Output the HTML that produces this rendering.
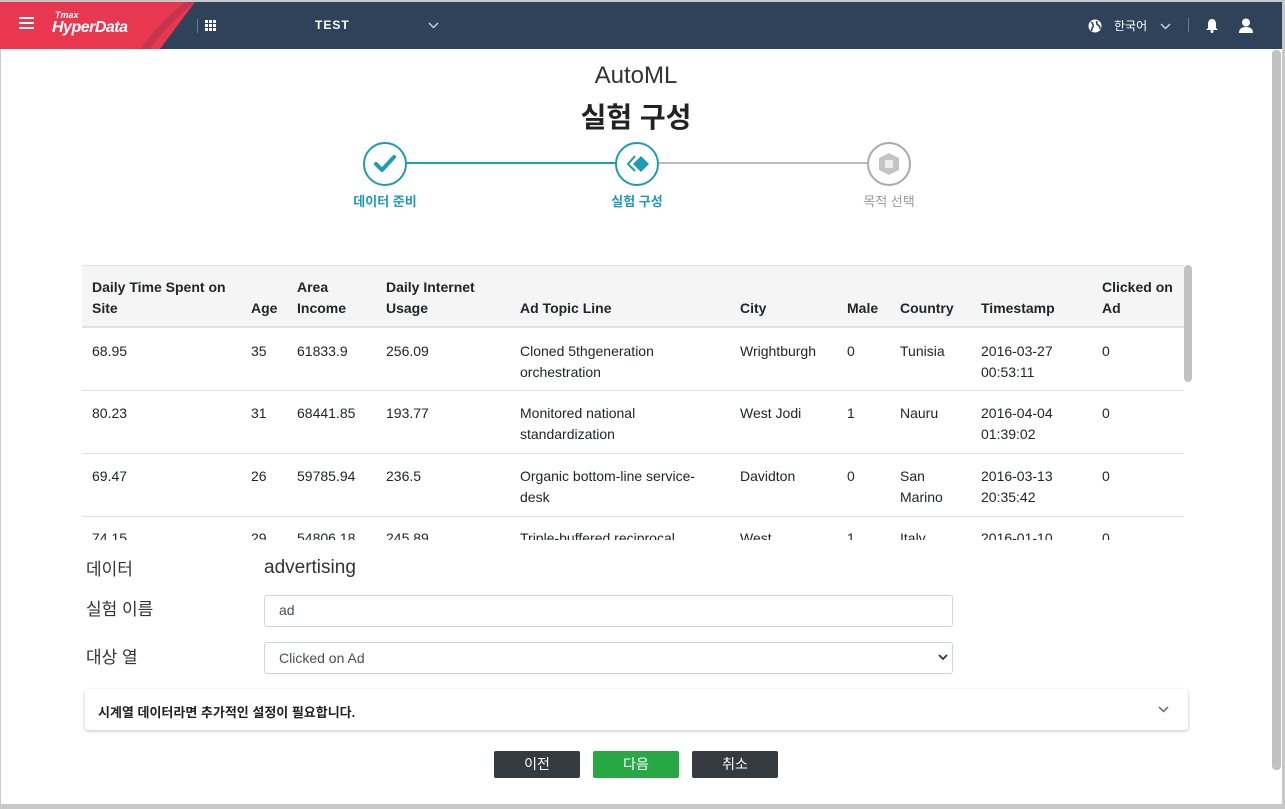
<!DOCTYPE html>
<html><head><meta charset="utf-8"><style>
*{box-sizing:border-box;margin:0;padding:0}
body{width:1285px;height:809px;overflow:hidden;background:#fff;font-family:"Liberation Sans","Noto Sans CJK KR",sans-serif;color:#212529;position:relative}
.a{position:absolute}
.hdr{left:0;top:0;width:1285px;height:49px;background:#2e4259;border-top:2px solid #c8c8c8}
.t{font-size:14px;color:#212529;line-height:21px}
.th{font-weight:bold}
.row{left:82px;width:1102px;border-bottom:1px solid #dee2e6}
.btn{top:751px;height:27px;width:86px;border-radius:2px;color:#fff;font-size:14px;text-align:center;line-height:27px}
</style></head><body>
<div class="a hdr">
 <svg class="a" style="left:0;top:0" width="200" height="47"><path d="M0 0H195L160 47H0Z" fill="#e8374f"/><path d="M150 47 Q170 20 195 0 H185 Q160 20 140 47Z" fill="#b8354f" opacity=".7"/></svg>
 <div class="a" style="left:19px;top:15px;width:15px;height:2px;background:#fff;box-shadow:0 5px 0 #fff,0 10px 0 #fff"></div>
 <div class="a" style="left:55px;top:8px;color:#fff;font-size:9px;font-weight:bold;font-style:italic">Tmax</div>
 <div class="a" style="left:52px;top:17px;color:#fff;font-size:16px;font-weight:bold;font-style:italic;letter-spacing:-0.5px">HyperData</div>
 <div class="a" style="left:197px;top:17px;width:1px;height:14px;background:#6b7b8d"></div>
 <svg class="a" style="left:205px;top:18px" width="12" height="12" fill="#fff"><rect x="0" y="0" width="3" height="3"/><rect x="4" y="0" width="3" height="3"/><rect x="8" y="0" width="3" height="3"/><rect x="0" y="4" width="3" height="3"/><rect x="4" y="4" width="3" height="3"/><rect x="8" y="4" width="3" height="3"/><rect x="0" y="8" width="3" height="3"/><rect x="4" y="8" width="3" height="3"/><rect x="8" y="8" width="3" height="3"/></svg>
 <div class="a" style="left:315px;top:16px;color:#fff;font-size:12px;font-weight:bold;letter-spacing:1px">TEST</div>
 <svg class="a" style="left:428px;top:20px" width="11" height="7"><path d="M1 1L5.5 5.5L10 1" stroke="#c8d0da" stroke-width="1.5" fill="none"/></svg>
 <svg class="a" style="left:1088px;top:17px" width="14" height="14"><circle cx="7" cy="7" r="6.5" fill="#fff"/><path d="M3 3Q6 5 5 8Q3 10 4 12M9 2Q8 5 10 6Q12 7 12 10" stroke="#2e4259" stroke-width="1.6" fill="none"/></svg>
 <div class="a" style="left:1114px;top:15px;color:#fff;font-size:12px">한국어</div>
 <svg class="a" style="left:1160px;top:21px" width="11" height="7"><path d="M1 1L5.5 5.5L10 1" stroke="#c8d0da" stroke-width="1.5" fill="none"/></svg>
 <div class="a" style="left:1188px;top:16px;width:1px;height:14px;background:#6b7b8d"></div>
 <svg class="a" style="left:1205px;top:16px" width="14" height="15" fill="#fff"><path d="M7 1C4 1 3 4 3 6V10L1 12H13L11 10V6C11 4 10 1 7 1Z"/><circle cx="7" cy="13.5" r="1.5"/></svg>
 <svg class="a" style="left:1238px;top:16px" width="16" height="15" fill="#fff"><circle cx="8" cy="4.5" r="4"/><path d="M1 15Q1 9 8 9Q15 9 15 15Z"/></svg>
</div>
<div class="a" style="left:1282px;top:0;width:3px;height:809px;background:#c8c8c8"></div>
<div class="a" style="left:0;top:804px;width:1285px;height:5px;background:#c8c8c8"></div>
<div class="a" style="left:0;top:49px;width:1px;height:760px;background:#c8c8c8"></div>
<div class="a" style="left:1272px;top:50px;width:9px;height:720px;background:#c1c1c1;border-radius:4px"></div>

<div class="a" style="left:0;width:1272px;top:62px;text-align:center;font-size:24px;color:#333">AutoML</div>
<div class="a" style="left:0;width:1272px;top:96px;text-align:center;font-size:28px;font-weight:bold;color:#222">실험 구성</div>

<div class="a" style="left:406px;top:162px;width:210px;height:2px;background:#1e9bb5"></div>
<div class="a" style="left:658px;top:162px;width:210px;height:2px;background:#bbb"></div>
<div class="a" style="left:363px;top:142px;width:44px;height:44px;border:2px solid #1e9bb5;border-radius:50%;background:#fff"></div>
<svg class="a" style="left:372px;top:151px" width="26" height="26"><path d="M4 13L10 19L22 6" stroke="#1e9bb5" stroke-width="4" fill="none" stroke-linecap="round" stroke-linejoin="round"/></svg>
<div class="a" style="left:615px;top:142px;width:44px;height:44px;border:2px solid #1e9bb5;border-radius:50%;background:#fff"></div>
<svg class="a" style="left:622px;top:149px" width="30" height="30"><path d="M13 7L6 15L13 22" stroke="#1e9bb5" stroke-width="2" fill="none"/><path d="M19 7L27 15L19 23L11 15Z" fill="#1e9bb5"/></svg>
<div class="a" style="left:867px;top:142px;width:44px;height:44px;border:2px solid #aaa;border-radius:50%;background:#fff"></div>
<svg class="a" style="left:876px;top:151px" width="26" height="26"><path d="M13 2L23 7V19L13 24L3 19V7Z" fill="#c4c4c4"/><path d="M9 9H17V17H9Z" fill="#eee"/></svg>
<div class="a" style="left:340px;width:90px;top:191px;text-align:center;font-size:13px;font-weight:bold;color:#1e9bb5">데이터 준비</div>
<div class="a" style="left:592px;width:90px;top:191px;text-align:center;font-size:13px;font-weight:bold;color:#1e9bb5">실험 구성</div>
<div class="a" style="left:844px;width:90px;top:191px;text-align:center;font-size:13px;color:#999">목적 선택</div>

<div class="a" style="left:82px;top:265px;width:1102px;height:275px;overflow:hidden">
 <div class="a" style="left:0;top:0;width:1102px;height:63px;background:#f5f5f5;border-top:1px solid #dee2e6;border-bottom:2px solid #dee2e6"></div>
 <div class="a t th" style="left:10px;top:12px">Daily Time Spent on<br>Site</div>
 <div class="a t th" style="left:169px;top:33px">Age</div>
 <div class="a t th" style="left:215px;top:12px">Area<br>Income</div>
 <div class="a t th" style="left:304px;top:12px">Daily Internet<br>Usage</div>
 <div class="a t th" style="left:438px;top:33px">Ad Topic Line</div>
 <div class="a t th" style="left:658px;top:33px">City</div>
 <div class="a t th" style="left:765px;top:33px">Male</div>
 <div class="a t th" style="left:818px;top:33px">Country</div>
 <div class="a t th" style="left:899px;top:33px">Timestamp</div>
 <div class="a t th" style="left:1020px;top:12px">Clicked on<br>Ad</div>

 <div class="a row" style="left:0;top:63px;height:63px"></div>
 <div class="a t" style="left:10px;top:76px">68.95</div><div class="a t" style="left:169px;top:76px">35</div><div class="a t" style="left:215px;top:76px">61833.9</div><div class="a t" style="left:304px;top:76px">256.09</div><div class="a t" style="left:438px;top:76px">Cloned 5thgeneration<br>orchestration</div><div class="a t" style="left:658px;top:76px">Wrightburgh</div><div class="a t" style="left:765px;top:76px">0</div><div class="a t" style="left:818px;top:76px">Tunisia</div><div class="a t" style="left:899px;top:76px">2016-03-27<br>00:53:11</div><div class="a t" style="left:1020px;top:76px">0</div>

 <div class="a row" style="left:0;top:126px;height:63px"></div>
 <div class="a t" style="left:10px;top:138px">80.23</div><div class="a t" style="left:169px;top:138px">31</div><div class="a t" style="left:215px;top:138px">68441.85</div><div class="a t" style="left:304px;top:138px">193.77</div><div class="a t" style="left:438px;top:138px">Monitored national<br>standardization</div><div class="a t" style="left:658px;top:138px">West Jodi</div><div class="a t" style="left:765px;top:138px">1</div><div class="a t" style="left:818px;top:138px">Nauru</div><div class="a t" style="left:899px;top:138px">2016-04-04<br>01:39:02</div><div class="a t" style="left:1020px;top:138px">0</div>

 <div class="a row" style="left:0;top:189px;height:63px"></div>
 <div class="a t" style="left:10px;top:201px">69.47</div><div class="a t" style="left:169px;top:201px">26</div><div class="a t" style="left:215px;top:201px">59785.94</div><div class="a t" style="left:304px;top:201px">236.5</div><div class="a t" style="left:438px;top:201px">Organic bottom-line service-<br>desk</div><div class="a t" style="left:658px;top:201px">Davidton</div><div class="a t" style="left:765px;top:201px">0</div><div class="a t" style="left:818px;top:201px">San<br>Marino</div><div class="a t" style="left:899px;top:201px">2016-03-13<br>20:35:42</div><div class="a t" style="left:1020px;top:201px">0</div>

 <div class="a t" style="left:10px;top:263px">74.15</div><div class="a t" style="left:169px;top:263px">29</div><div class="a t" style="left:215px;top:263px">54806.18</div><div class="a t" style="left:304px;top:263px">245.89</div><div class="a t" style="left:438px;top:263px">Triple-buffered reciprocal</div><div class="a t" style="left:658px;top:263px">West</div><div class="a t" style="left:765px;top:263px">1</div><div class="a t" style="left:818px;top:263px">Italy</div><div class="a t" style="left:899px;top:263px">2016-01-10</div><div class="a t" style="left:1020px;top:263px">0</div>
</div>
<div class="a" style="left:1184px;top:265px;width:8px;height:117px;background:#c1c1c1;border-radius:4px"></div>

<div class="a" style="left:86px;top:555px;font-size:17px;color:#333">데이터</div>
<div class="a" style="left:264px;top:557px;font-size:19px;color:#333">advertising</div>
<div class="a" style="left:86px;top:595px;font-size:17px;color:#333">실험 이름</div>
<div class="a" style="left:264px;top:595px;width:689px;height:32px;border:1px solid #ced4da;border-radius:3px;padding:6px 14px;font-size:14px;color:#495057">ad</div>
<div class="a" style="left:86px;top:643px;font-size:17px;color:#333">대상 열</div>
<div class="a" style="left:264px;top:642px;width:689px;height:32px;border:1px solid #ced4da;border-radius:3px;padding:7px 14px;font-size:14px;color:#495057">Clicked on Ad</div>
<svg class="a" style="left:938px;top:654px" width="10" height="7"><path d="M1 1L5 5L9 1" stroke="#333" stroke-width="1.8" fill="none"/></svg>

<div class="a" style="left:85px;top:689px;width:1103px;height:41px;background:#fff;border-radius:3px;box-shadow:0 1px 3px rgba(0,0,0,.25)"></div>
<div class="a" style="left:98px;top:702px;font-size:13px;font-weight:bold;color:#222">시계열 데이터라면 추가적인 설정이 필요합니다.</div>
<svg class="a" style="left:1158px;top:706px" width="11" height="7"><path d="M1 1L5.5 5.5L10 1" stroke="#666" stroke-width="1.5" fill="none"/></svg>

<div class="a btn" style="left:494px;background:#343a40">이전</div>
<div class="a btn" style="left:593px;background:#28a745">다음</div>
<div class="a btn" style="left:692px;background:#343a40">취소</div>
</body></html>
